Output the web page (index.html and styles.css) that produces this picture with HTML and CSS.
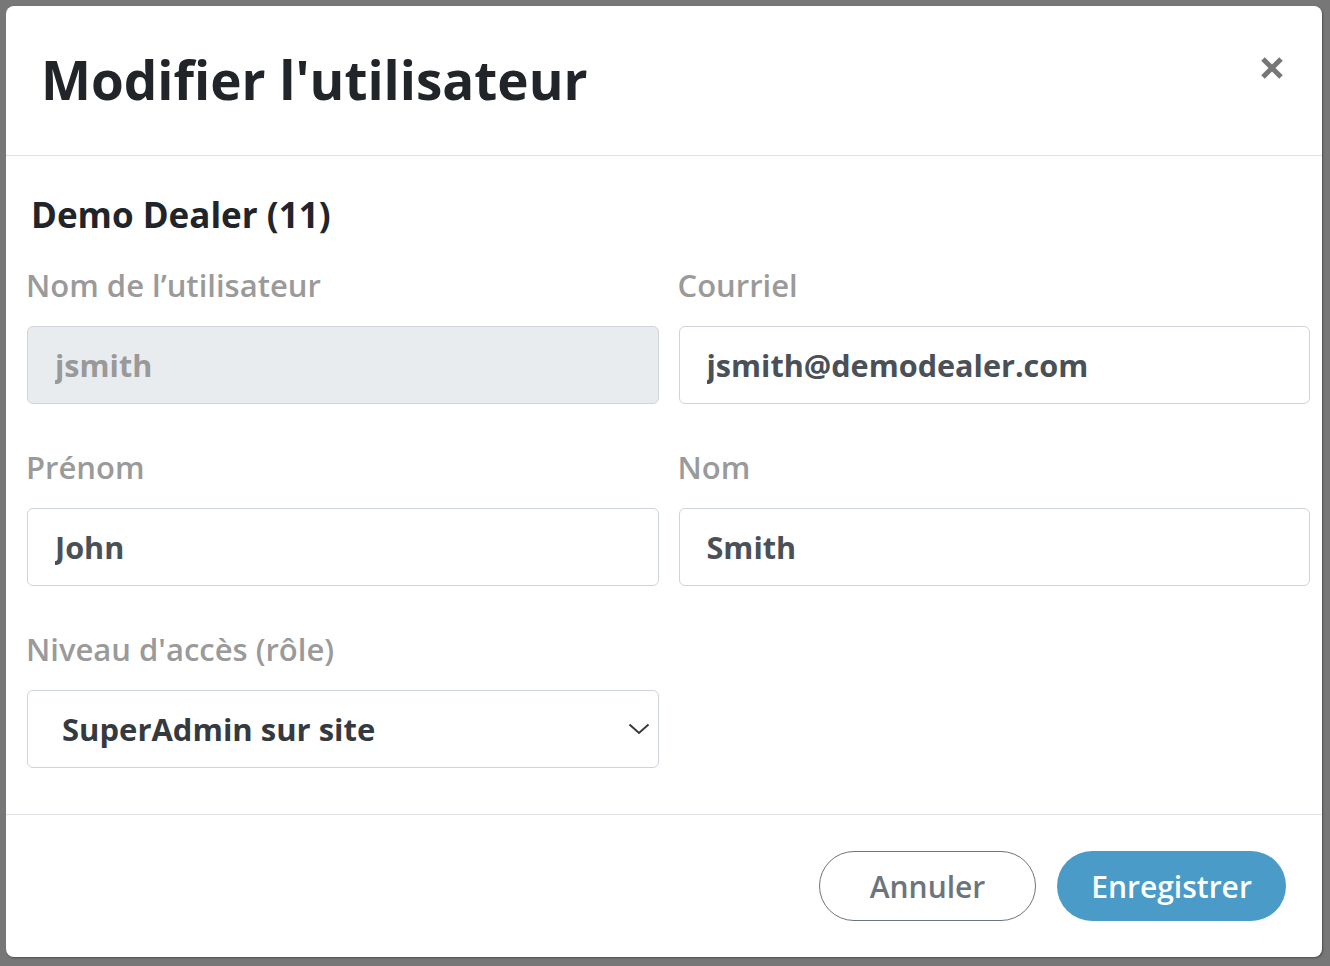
FILE: index.html
```html
<!DOCTYPE html>
<html lang="fr">
<head>
<meta charset="utf-8">
<title>Modifier l'utilisateur</title>
<link rel="stylesheet" href="styles.css">
</head>
<body>
<div class="modal">
  <header class="modal-header">
    <h1 class="modal-title">Modifier l'utilisateur</h1>
    <button class="close" type="button" aria-label="Fermer">
      <svg width="24" height="24" viewBox="0 0 24 24"><path d="M3 3 L21 21 M21 3 L3 21" stroke="#777" stroke-width="5" stroke-linecap="butt"/></svg>
    </button>
  </header>
  <section class="modal-body">
    <h2 class="dealer">Demo Dealer (11)</h2>
    <div class="grid">
      <div class="field">
        <label class="label">Nom de l’utilisateur</label>
        <input class="input" type="text" value="jsmith" disabled>
      </div>
      <div class="field">
        <label class="label">Courriel</label>
        <input class="input" type="text" value="jsmith@demodealer.com">
      </div>
      <div class="field">
        <label class="label">Prénom</label>
        <input class="input" type="text" value="John">
      </div>
      <div class="field">
        <label class="label">Nom</label>
        <input class="input" type="text" value="Smith">
      </div>
      <div class="field">
        <label class="label">Niveau d'accès (rôle)</label>
        <div class="select-wrap">
          <select class="select"><option>SuperAdmin sur site</option></select>
          <svg class="chevron" width="22" height="12" viewBox="0 0 22 12"><path d="M1.5 1.5 L11 10 L20.5 1.5" fill="none" stroke="#343a40" stroke-width="2"/></svg>
        </div>
      </div>
    </div>
  </section>
  <footer class="modal-footer">
    <button class="btn btn-outline" type="button">Annuler</button>
    <button class="btn btn-primary" type="button">Enregistrer</button>
  </footer>
</div>
</body>
</html>
```

FILE: styles.css
```css
* { box-sizing: border-box; }
html, body { margin: 0; padding: 0; }
body {
  background: #777777;
  font-family: "Open Sans", "Liberation Sans", sans-serif;
  width: 1330px;
  height: 966px;
  padding: 6px 8px 9px 6px;
}
.modal {
  background: #ffffff;
  border-radius: 8px;
  width: 1316px;
  height: 951px;
  display: flex;
  flex-direction: column;
  box-shadow: 1px 1px 2px rgba(0,0,0,0.35);
}
.modal-header {
  height: 150px;
  border-bottom: 1px solid #dee2e6;
  display: flex;
  align-items: flex-start;
  justify-content: space-between;
  padding: 0 38px 0 35px;
}
.modal-title {
  margin: 0;
  font-size: 53px;
  font-weight: 700;
  line-height: 1;
  color: #212529;
  padding-top: 47px;
}
.close {
  border: 0;
  background: transparent;
  padding: 0;
  margin-top: 50px;
  width: 24px;
  height: 24px;
  display: flex;
}
.modal-body {
  height: 659px;
  border-bottom: 1px solid #dee2e6;
  padding: 39px 12px 0 21px;
}
.dealer {
  margin: 0 0 30px 4px;
  font-size: 35px;
  line-height: 40px;
  font-weight: 700;
  color: #212529;
}
.grid {
  display: grid;
  grid-template-columns: 1fr 1fr;
  column-gap: 20px;
  row-gap: 43px;
}
.field { display: flex; flex-direction: column; }
.label {
  font-size: 31px;
  line-height: 40px;
  font-weight: 600;
  color: #9a9a9a;
  margin-bottom: 21px;
  margin-left: -1px;
}
.input {
  height: 78px;
  border: 1.5px solid #ced4da;
  border-radius: 6px;
  padding: 0 27px;
  font-family: "Open Sans", "Liberation Sans", sans-serif;
  font-size: 30.6px;
  font-weight: 700;
  color: #495057;
  background: #ffffff;
  outline: none;
  width: 100%;
}
.input:disabled {
  background: #e9ecef;
  color: #999999;
  -webkit-text-fill-color: #999999;
  opacity: 1;
}
.select-wrap { position: relative; }
.select {
  appearance: none;
  -webkit-appearance: none;
  width: 100%;
  height: 78px;
  border: 1.5px solid #ced4da;
  border-radius: 6px;
  padding: 0 34px;
  font-family: "Open Sans", "Liberation Sans", sans-serif;
  font-size: 31px;
  font-weight: 700;
  color: #343a40;
  background: #ffffff;
  outline: none;
}
.chevron {
  position: absolute;
  right: 9px;
  top: 33px;
}
.modal-footer {
  flex: 1;
  display: flex;
  align-items: center;
  justify-content: flex-end;
  gap: 21px;
  padding: 0 36px 0 0;
}
.btn {
  height: 70px;
  border-radius: 35px;
  font-family: "Open Sans", "Liberation Sans", sans-serif;
  font-size: 30px;
  font-weight: 600;
  display: flex;
  align-items: center;
  justify-content: center;
  padding: 0;
}
.btn-outline {
  width: 217px;
  background: #ffffff;
  border: 1.5px solid #6c757d;
  color: #6c757d;
}
.btn-primary {
  width: 229px;
  background: #4a9bc8;
  border: 0;
  color: #ffffff;
}
```
